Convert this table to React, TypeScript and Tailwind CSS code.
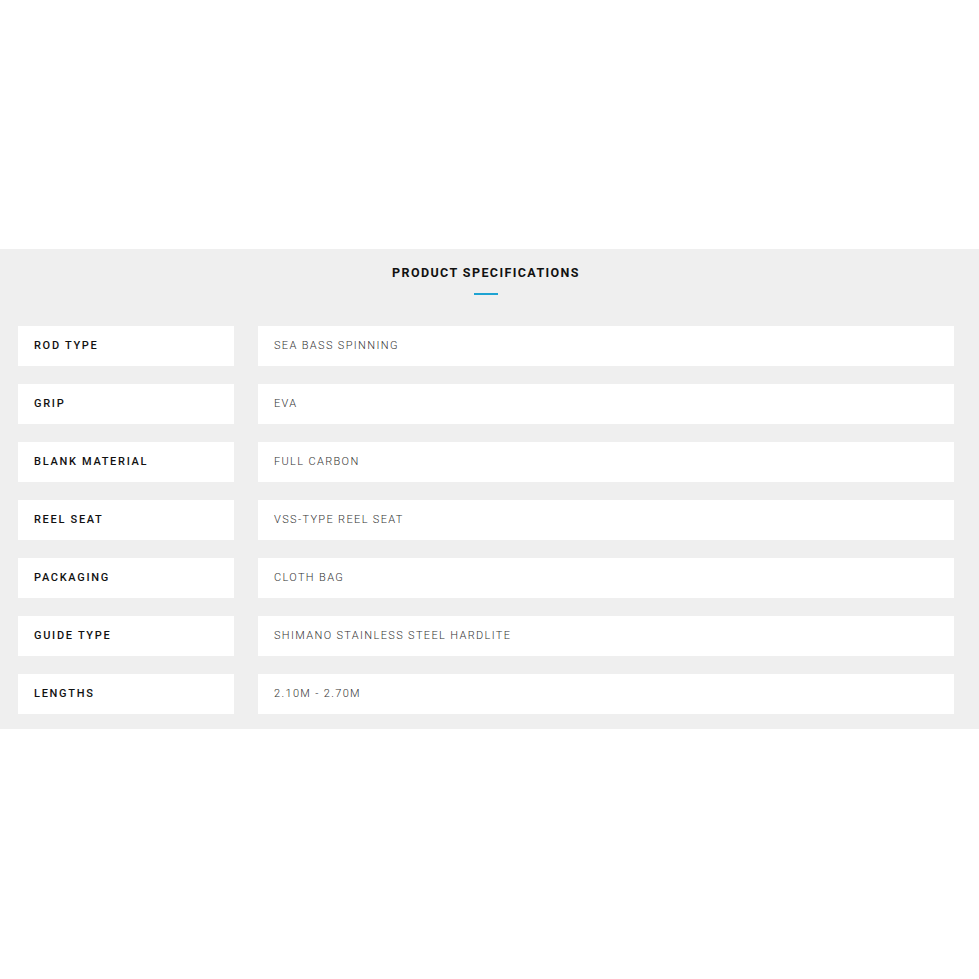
const specs = [
  { label: "ROD TYPE", value: "SEA BASS SPINNING" },
  { label: "GRIP", value: "EVA" },
  { label: "BLANK MATERIAL", value: "FULL CARBON" },
  { label: "REEL SEAT", value: "VSS-TYPE REEL SEAT" },
  { label: "PACKAGING", value: "CLOTH BAG" },
  { label: "GUIDE TYPE", value: "SHIMANO STAINLESS STEEL HARDLITE" },
  { label: "LENGTHS", value: "2.10M - 2.70M" },
];

export default function App() {
  return (
    <div className="min-h-screen bg-white font-['Roboto',sans-serif]">
      <div className="h-[249px]" />
      <section className="bg-[#efefef] pt-[14px] pb-[15px] pl-[18px] pr-[25px]">
        <h2 className="text-center text-[12.5px] font-bold tracking-[1.4px] text-[#111] leading-[20px]">
          PRODUCT SPECIFICATIONS
        </h2>
        <div className="mx-auto mt-[10px] h-[1.5px] w-[24px] bg-[#1ea3d2]" />
        <div className="mt-[31px] flex flex-col gap-[18px]">
          {specs.map((s) => (
            <div key={s.label} className="flex gap-[24px]">
              <div className="flex h-[40px] w-[216px] items-center bg-white pl-[16px] pt-[2px] text-[11px] font-medium tracking-[1.7px] text-[#111]">
                {s.label}
              </div>
              <div className="flex h-[40px] flex-1 items-center bg-white pl-[16px] pt-[2px] text-[11px] font-light tracking-[1.35px] text-[#333]">
                {s.value}
              </div>
            </div>
          ))}
        </div>
      </section>
    </div>
  );
}
